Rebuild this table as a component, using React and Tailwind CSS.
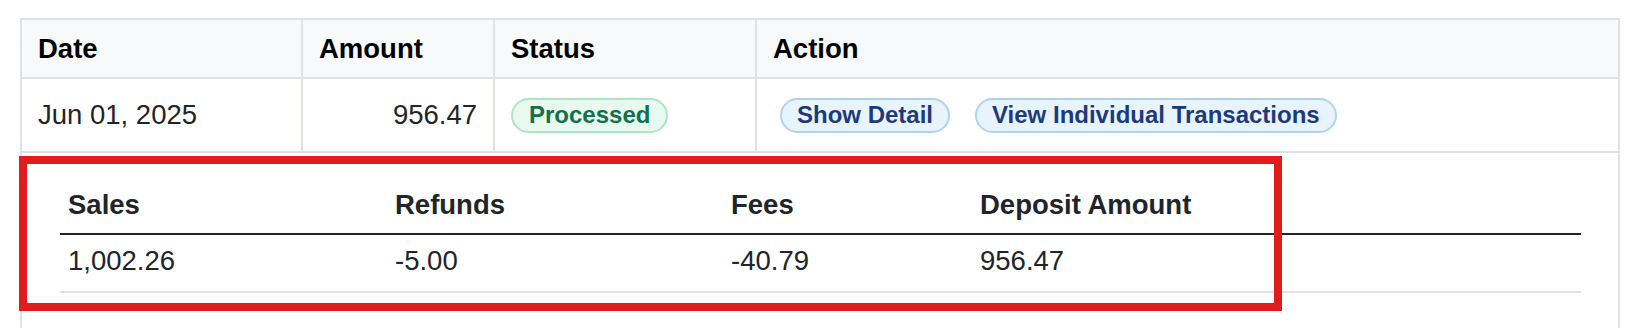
export default function App() {
  const detail = [
    { label: 'Sales', value: '1,002.26' },
    { label: 'Refunds', value: '-5.00' },
    { label: 'Fees', value: '-40.79' },
    { label: 'Deposit Amount', value: '956.47' },
  ]

  return (
    <div className="relative min-h-screen bg-white pt-[18px] pl-[20px] font-['Liberation_Sans',Arial,sans-serif]">
      <div className="w-[1600px] border-2 border-[#dee2e6] text-[27.5px] text-[#212529]">
        {/* header */}
        <div className="grid h-[59px] grid-cols-[281px_192px_262px_1fr] border-b-2 border-[#dee2e6] bg-[#f8f9fa] font-bold text-black">
          <div className="flex items-center border-r-2 border-[#dee2e6] px-4">Date</div>
          <div className="flex items-center border-r-2 border-[#dee2e6] px-4">Amount</div>
          <div className="flex items-center border-r-2 border-[#dee2e6] px-4">Status</div>
          <div className="flex items-center px-4">Action</div>
        </div>

        {/* row */}
        <div className="grid h-[74px] grid-cols-[281px_192px_262px_1fr] border-b-2 border-[#dee2e6]">
          <div className="flex items-center border-r-2 border-[#dee2e6] px-4">Jun 01, 2025</div>
          <div className="flex items-center justify-end border-r-2 border-[#dee2e6] px-4">956.47</div>
          <div className="flex items-center border-r-2 border-[#dee2e6] px-4">
            <span className="flex h-[35px] items-center rounded-full border-2 border-[#abe5c4] bg-[#e8f9ef] px-[16px] text-[24px] font-bold text-[#12714a]">
              Processed
            </span>
          </div>
          <div className="flex items-center gap-[25px] pl-[23px]">
            <button className="flex h-[35px] items-center rounded-full border-2 border-[#b0d3ec] bg-[#e8f4fd] px-[15px] text-[24px] font-bold text-[#1d3a7c]">
              Show Detail
            </button>
            <button className="flex h-[35px] items-center rounded-full border-2 border-[#b0d3ec] bg-[#e8f4fd] px-[15px] text-[24px] font-bold text-[#1d3a7c]">
              View Individual Transactions
            </button>
          </div>
        </div>

        {/* expanded detail */}
        <div className="pt-[24px] pr-[37px] pb-[40px] pl-[38px]">
          <div className="grid grid-cols-[327px_336px_249px_1fr] border-b-2 border-[#212529] font-bold leading-[36px]">
            {detail.map(d => (
              <div key={d.label} className="px-2 py-[10px]">{d.label}</div>
            ))}
          </div>
          <div className="grid grid-cols-[327px_336px_249px_1fr] border-b-2 border-[#dee2e6] leading-[36px]">
            {detail.map(d => (
              <div key={d.label} className="px-2 pt-[8px] pb-[12px]">{d.value}</div>
            ))}
          </div>
        </div>
      </div>

      {/* highlight box */}
      <div className="pointer-events-none absolute left-[19px] top-[156px] h-[155px] w-[1263px] border-8 border-[#e31b1b]" />
    </div>
  )
}
